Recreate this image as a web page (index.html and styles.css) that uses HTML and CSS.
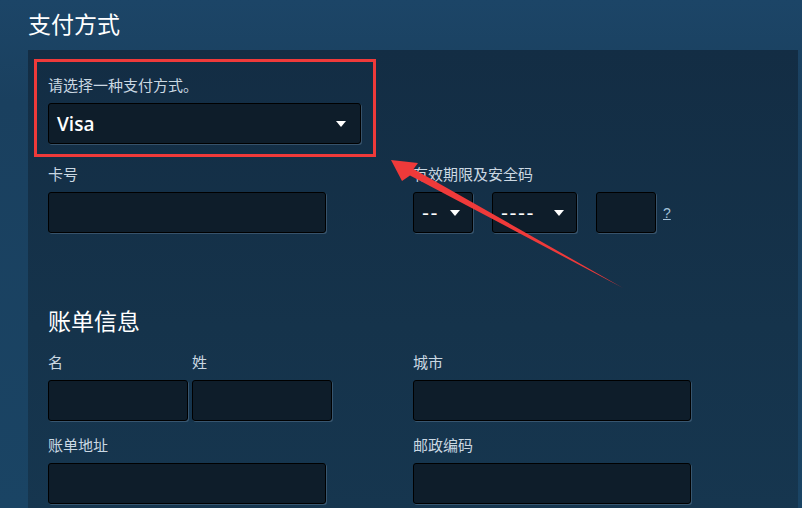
FILE: index.html
```html
<!DOCTYPE html>
<html lang="zh-CN">
<head>
    <meta charset="UTF-8">
    <title>支付方式</title>
    <link rel="stylesheet" href="styles.css">
</head>
<body>
    <div class="page">
        <h2 class="page-title">支付方式</h2>

        <div class="panel">
            <div class="field">
                <label class="field-label">请选择一种支付方式。</label>
                <div class="select select-method">
                    <span class="select-value">Visa</span>
                    <i class="caret"></i>
                </div>
            </div>

            <div class="two-col row-gap-lg">
                <div class="field">
                    <label class="field-label">卡号</label>
                    <div class="input input-wide"></div>
                </div>
                <div class="field">
                    <label class="field-label">有效期限及安全码</label>
                    <div class="expiry">
                        <div class="select select-month">
                            <span class="select-dash">--</span>
                            <i class="caret"></i>
                        </div>
                        <div class="select select-year">
                            <span class="select-dash">----</span>
                            <i class="caret"></i>
                        </div>
                        <div class="input input-cvv"></div>
                        <a href="#cvv" class="help-link">?</a>
                    </div>
                </div>
            </div>

            <h3 class="section-title">账单信息</h3>

            <div class="two-col">
                <div class="name-row">
                    <div class="field">
                        <label class="field-label">名</label>
                        <div class="input input-name"></div>
                    </div>
                    <div class="field">
                        <label class="field-label">姓</label>
                        <div class="input input-name"></div>
                    </div>
                </div>
                <div class="field">
                    <label class="field-label">城市</label>
                    <div class="input input-wide"></div>
                </div>
            </div>

            <div class="two-col row-gap">
                <div class="field">
                    <label class="field-label">账单地址</label>
                    <div class="input input-wide"></div>
                </div>
                <div class="field">
                    <label class="field-label">邮政编码</label>
                    <div class="input input-wide"></div>
                </div>
            </div>
        </div>

        <!-- red annotation drawn over the form -->
        <svg class="annotation" width="802" height="508" viewBox="0 0 802 508">
            <rect x="35.5" y="60.5" width="339" height="95" fill="none" stroke="#ef3a3a" stroke-width="3"/>
            <polygon fill="#ef3a3a" points="391,160 418,163 413.5,169 623,288 410,175.5 402,181"/>
        </svg>
    </div>
</body>
</html>
```

FILE: styles.css
```css
* {
    margin: 0;
    padding: 0;
    box-sizing: border-box;
}

body {
    width: 802px;
    height: 508px;
    overflow: hidden;
    background: linear-gradient(180deg, #1c4567 0%, #1a405f 20%, #1a4464 100%);
    color: #c6d4df;
    font-family: "Liberation Sans", "Noto Sans CJK SC", sans-serif;
}

.page {
    position: relative;
    padding-top: 10px;
}

.page-title {
    padding-left: 28px;
    font-size: 23px;
    font-weight: normal;
    line-height: 30px;
    color: #ffffff;
    margin-bottom: 10px;
}

/* Form panel */
.panel {
    margin: 0 4px 0 28px;
    height: 460px;
    padding: 27px 20px 0;
    background: linear-gradient(180deg, #132d44 0%, #15334b 60%, #16364f 100%);
}

.field-label {
    display: block;
    font-size: 15px;
    line-height: 18px;
    margin-bottom: 8px;
    color: #cbd8e2;
}

.two-col {
    display: grid;
    grid-template-columns: 365px 1fr;
}

.row-gap-lg {
    margin-top: 22px;
}

.row-gap {
    margin-top: 16px;
}

.section-title {
    margin: 75px 0 18px;
    font-size: 23px;
    font-weight: normal;
    line-height: 28px;
    color: #ffffff;
}

.name-row {
    display: flex;
    gap: 4px;
}

/* Inputs and selects */
.input,
.select {
    height: 41px;
    background: #0e1d2a;
    border: 1px solid #000;
    border-radius: 3px;
    box-shadow: 1px 1px 0 rgba(120, 150, 175, 0.35);
}

.input-wide {
    width: 278px;
}

.input-name {
    width: 140px;
}

.input-cvv {
    width: 60px;
}

.select {
    display: flex;
    align-items: center;
    justify-content: space-between;
    padding: 0 14px 0 8px;
    color: #ffffff;
}

.select-method {
    width: 313px;
}

.select-value {
    font-family: "Open Sans", "Liberation Sans", sans-serif;
    font-size: 19px;
    font-weight: 600;
}

.select-dash {
    font-size: 21px;
    letter-spacing: 1.5px;
}

.caret {
    width: 0;
    height: 0;
    border-left: 5px solid transparent;
    border-right: 5px solid transparent;
    border-top: 6px solid #ffffff;
}

.expiry {
    display: flex;
    align-items: center;
    gap: 19px;
}

.select-month {
    width: 60px;
    padding-right: 12px;
}

.select-year {
    width: 85px;
    padding-right: 12px;
}

.help-link {
    margin-left: -12px;
    font-size: 14px;
    color: #a3c2da;
    text-decoration: underline;
}

.annotation {
    position: absolute;
    top: 0;
    left: 0;
    pointer-events: none;
}
```
